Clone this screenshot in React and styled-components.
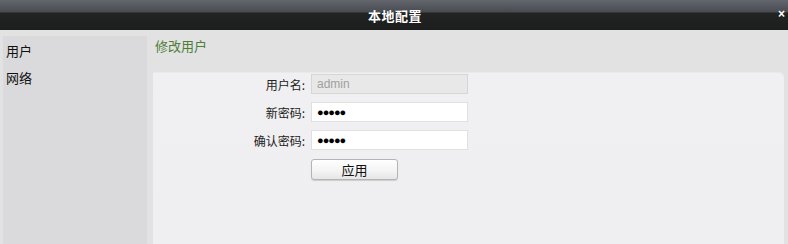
import React from "react";
import styled, { createGlobalStyle } from "styled-components";

const GlobalStyle = createGlobalStyle`
  html, body {
    margin: 0;
    padding: 0;
    background: #e2e2e2;
  }
  body {
    font-family: "Noto Sans CJK SC", "Liberation Sans", sans-serif;
  }
`;

const Window = styled.div`
  width: 788px;
  height: 244px;
  display: flex;
  flex-direction: column;
  overflow: hidden;
`;

const TitleBar = styled.div`
  height: 30px;
  flex: none;
  position: relative;
  display: flex;
  align-items: center;
  justify-content: center;
  background: linear-gradient(
    #63676d 0,
    #484b50 12px,
    #222424 13px,
    #1c1e1e 30px
  );
`;

const Title = styled.div`
  color: #ffffff;
  font-size: 13px;
  font-weight: bold;
  letter-spacing: 0.5px;
  padding-left: 2px;
`;

const Close = styled.span`
  position: absolute;
  right: 3px;
  top: 8px;
  color: #ffffff;
  font-family: "Liberation Sans", sans-serif;
  font-size: 12px;
  font-weight: bold;
  line-height: 12px;
`;

const Body = styled.div`
  flex: 1;
  display: flex;
  padding: 6px 4px 0 3px;
  background: #e2e2e2;
`;

const Sidebar = styled.div`
  width: 144px;
  flex: none;
  background: #dad9db;
  padding-top: 1px;
  display: flex;
  flex-direction: column;
`;

const NavItem = styled.div`
  font-size: 13px;
  line-height: 27px;
  height: 27px;
  padding-left: 3px;
  color: #111;
`;

const Main = styled.div`
  flex: 1;
  margin-left: 6px;
  display: flex;
  flex-direction: column;
`;

const Heading = styled.div`
  color: #4e7d3a;
  font-size: 13px;
  line-height: 20px;
  padding: 0 0 0 2px;
  height: 37px;
  box-sizing: border-box;
`;

const Panel = styled.div`
  flex: 1;
  background: linear-gradient(#f0eff1, #efeef0);
  border-top-right-radius: 5px;
  padding-top: 1px;
  box-shadow: 0 -1px 0 #e9e9ea;
`;

const Form = styled.div`
  display: grid;
  grid-template-columns: 152px 157px;
  column-gap: 6px;
  row-gap: 8px;
  align-items: center;
`;

const Label = styled.label`
  text-align: right;
  font-size: 12px;
  color: #222;
`;

const Input = styled.div`
  height: 20px;
  box-sizing: border-box;
  border: 1px solid ${(p) => (p.disabled ? "#d6d6d6" : "#e0e0e0")};
  background: ${(p) => (p.disabled ? "#e8e8e8" : "#ffffff")};
  color: ${(p) => (p.disabled ? "#a0a0a0" : "#000")};
  font-family: "Liberation Sans", Arial, sans-serif;
  font-size: ${(p) => (p.password ? "11px" : "12px")};
  letter-spacing: ${(p) => (p.password ? "-1px" : "0")};
  line-height: 18px;
  padding-left: 5px;
`;

const Spacer = styled.div``;

const ApplyButton = styled.button`
  display: block;
  width: 87px;
  height: 21px;
  margin: 1px 0 0 0;
  border: 1px solid #b4b4b4;
  border-radius: 3px;
  background: linear-gradient(#ffffff, #f3f3f3 60%, #e6e6e6);
  box-shadow: 0 1px 1px rgba(0, 0, 0, 0.15);
  font-family: "Noto Sans CJK SC", sans-serif;
  font-size: 13px;
  color: #111;
  padding: 0;
  line-height: 18px;
`;

const fields = [
  { label: "用户名:", value: "admin", disabled: true },
  { label: "新密码:", value: "●●●●●", password: true },
  { label: "确认密码:", value: "●●●●●", password: true },
];

export default function App() {
  return (
    <Window>
      <GlobalStyle />
      <TitleBar>
        <Title>本地配置</Title>
        <Close>×</Close>
      </TitleBar>
      <Body>
        <Sidebar>
          <NavItem>用户</NavItem>
          <NavItem>网络</NavItem>
        </Sidebar>
        <Main>
          <Heading>修改用户</Heading>
          <Panel>
            <Form>
              {fields.map((f) => (
                <React.Fragment key={f.label}>
                  <Label>{f.label}</Label>
                  <Input disabled={f.disabled} password={f.password}>
                    {f.value}
                  </Input>
                </React.Fragment>
              ))}
              <Spacer />
              <ApplyButton>应用</ApplyButton>
            </Form>
          </Panel>
        </Main>
      </Body>
    </Window>
  );
}
